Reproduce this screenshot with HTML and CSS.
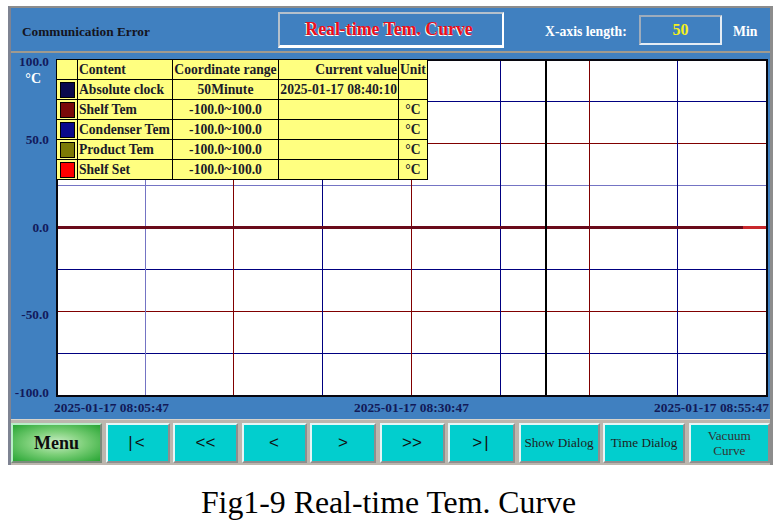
FILE: index.html
```html
<!DOCTYPE html>
<html lang="en">
<head>
<meta charset="utf-8">
<title>Real-time Tem. Curve</title>
<link rel="stylesheet" href="styles.css">
</head>
<body>
<div class="page">
  <div class="panel">
    <header class="topbar">
      <div class="status">Communication Error</div>
      <div class="title-box"><span class="title">Real-time Tem. Curve</span></div>
      <div class="xlabel">X-axis length:</div>
      <div class="xbox">50</div>
      <div class="xunit">Min</div>
    </header>
    <div class="sep"></div>
    <section class="chart">
      <div class="yaxis">
        <span class="tick t100">100.0</span>
        <span class="tick tunit">°C</span>
        <span class="tick t50">50.0</span>
        <span class="tick t0">0.0</span>
        <span class="tick tm50">-50.0</span>
        <span class="tick tm100">-100.0</span>
      </div>
      <div class="plot">
        <svg class="grid" width="708" height="334" viewBox="0 0 708 334" shape-rendering="crispEdges">
          <g stroke-width="1">
            <line x1="0" y1="40.5" x2="708" y2="40.5" stroke="#000080"/>
            <line x1="0" y1="82.5" x2="708" y2="82.5" stroke="#800000"/>
            <line x1="0" y1="124.5" x2="708" y2="124.5" stroke="#7474c4"/>
            <line x1="0" y1="208.5" x2="708" y2="208.5" stroke="#000080"/>
            <line x1="0" y1="250.5" x2="708" y2="250.5" stroke="#800000"/>
            <line x1="0" y1="292.5" x2="708" y2="292.5" stroke="#000080"/>
            <line x1="87.5" y1="0" x2="87.5" y2="334" stroke="#7474c4"/>
            <line x1="175.5" y1="0" x2="175.5" y2="334" stroke="#800000"/>
            <line x1="264.5" y1="0" x2="264.5" y2="334" stroke="#000080"/>
            <line x1="353.5" y1="0" x2="353.5" y2="334" stroke="#800000"/>
            <line x1="442.5" y1="0" x2="442.5" y2="334" stroke="#000080"/>
            <line x1="531.5" y1="0" x2="531.5" y2="334" stroke="#800000"/>
            <line x1="619.5" y1="0" x2="619.5" y2="334" stroke="#000080"/>
          </g>
          <rect x="0" y="165" width="708" height="3" fill="#6a0a1a"/>
          <rect x="685" y="165" width="23" height="3" fill="#c8282c"/>
          <rect x="487" y="0" width="2" height="334" fill="#000"/>
        </svg>
        <table class="legend">
          <colgroup>
            <col class="c-sw"><col class="c-name"><col class="c-range"><col class="c-val"><col class="c-unit">
          </colgroup>
          <tr>
            <td></td><td class="left">Content</td><td class="center">Coordinate range</td><td class="right">Current value</td><td class="left">Unit</td>
          </tr>
          <tr>
            <td><span class="sw sw-clock"></span></td><td class="left">Absolute clock</td><td class="center">50Minute</td><td class="right">2025-01-17 08:40:10</td><td></td>
          </tr>
          <tr>
            <td><span class="sw sw-shelf"></span></td><td class="left">Shelf Tem</td><td class="center">-100.0~100.0</td><td></td><td class="center">°C</td>
          </tr>
          <tr>
            <td><span class="sw sw-cond"></span></td><td class="left">Condenser Tem</td><td class="center">-100.0~100.0</td><td></td><td class="center">°C</td>
          </tr>
          <tr>
            <td><span class="sw sw-prod"></span></td><td class="left">Product Tem</td><td class="center">-100.0~100.0</td><td></td><td class="center">°C</td>
          </tr>
          <tr>
            <td><span class="sw sw-set"></span></td><td class="left">Shelf Set</td><td class="center">-100.0~100.0</td><td></td><td class="center">°C</td>
          </tr>
        </table>
      </div>
      <div class="times">
        <span>2025-01-17 08:05:47</span>
        <span>2025-01-17 08:30:47</span>
        <span>2025-01-17 08:55:47</span>
      </div>
    </section>
    <nav class="buttons">
      <div class="btn menu">Menu</div>
      <div class="btn nav nav-first">|&lt;</div>
      <div class="btn nav">&lt;&lt;</div>
      <div class="btn nav">&lt;</div>
      <div class="btn nav">&gt;</div>
      <div class="btn nav">&gt;&gt;</div>
      <div class="btn nav nav-last">&gt;|</div>
      <div class="btn txt">Show Dialog</div>
      <div class="btn txt">Time Dialog</div>
      <div class="btn txt two">Vacuum<br>Curve</div>
    </nav>
  </div>
  <p class="caption">Fig1-9 Real-time Tem. Curve</p>
</div>
</body>
</html>
```

FILE: styles.css
```css
* { box-sizing: border-box; }

html, body {
  margin: 0;
  padding: 0;
  background: #ffffff;
}

body {
  font-family: "Liberation Serif", "Times New Roman", serif;
  width: 784px;
  height: 523px;
  overflow: hidden;
}

.page {
  padding: 6px 0 0 8px;
}

.panel {
  width: 765px;
  background: #4080c0;
  border-top: 2px solid #8c8c8c;
  border-left: 3px solid #7e8392;
  border-right: 3px solid #8c8c8c;
}

/* ---------- header ---------- */
.topbar {
  display: flex;
  align-items: center;
  height: 43px;
}

.status {
  width: 267px;
  padding-left: 11px;
  margin-top: 5px;
  font-size: 13.3px;
  font-weight: bold;
  color: #14141e;
}

.title-box {
  align-self: flex-start;
  margin-top: 4px;
  width: 226px;
  height: 36px;
  border-top: 2px solid #b4c0cc;
  border-left: 2px solid #b4c0cc;
  border-right: 2px solid #ffffff;
  border-bottom: 3px solid #ffffff;
  display: flex;
  align-items: center;
  justify-content: center;
}

.title {
  font-size: 17.8px;
  font-weight: bold;
  color: #e8101c;
  text-shadow: -1px 1px 0 #ffffff;
  padding-right: 4px;
}

.xlabel {
  margin-left: 41px;
  margin-top: 5px;
  font-size: 13.7px;
  font-weight: bold;
  color: #ffffff;
  width: 94px;
}

.xbox {
  align-self: flex-start;
  margin-top: 7px;
  width: 83px;
  height: 30px;
  border-top: 2px solid #9eacbc;
  border-left: 2px solid #9eacbc;
  border-right: 2px solid #e4ecf4;
  border-bottom: 2px solid #e4ecf4;
  display: flex;
  align-items: center;
  justify-content: center;
  font-size: 16px;
  font-weight: bold;
  color: #f4f020;
}

.xunit {
  margin-left: 11px;
  margin-top: 5px;
  font-size: 13.7px;
  font-weight: bold;
  color: #ffffff;
}

.sep {
  height: 2px;
  background: #a09a8e;
}

/* ---------- chart ---------- */
.chart {
  display: grid;
  grid-template-columns: 45px 712px;
  grid-template-rows: 338px 22px;
  padding-top: 6px;
}

.yaxis {
  position: relative;
}

.tick {
  position: absolute;
  right: 7px;
  line-height: 16px;
  font-size: 13.3px;
  font-weight: bold;
  color: #121a5c;
}

.t100 { top: -5px; }
.tunit { top: 12px; right: 15px; color: #ffffff; font-size: 14px; }
.t50 { top: 73px; }
.t0 { top: 161px; }
.tm50 { top: 248px; }
.tm100 { top: 326px; }

.plot {
  position: relative;
  background: #ffffff;
  border: 2px solid #06060e;
}

.grid {
  display: block;
}

.legend {
  position: absolute;
  top: -2px;
  left: -2px;
  width: 371px;
  table-layout: fixed;
  border-collapse: collapse;
  background: #ffff80;
  font-size: 13.6px;
  font-weight: bold;
  color: #1a1a2a;
}

.c-sw { width: 21px; }
.c-name { width: 95px; }
.c-range { width: 106px; }
.c-val { width: 120px; }
.c-unit { width: 29px; }

.legend tr { height: 20px; }

.legend td {
  border: 1px solid #000000;
  padding: 0 1px;
  line-height: 18px;
  white-space: nowrap;
  overflow: hidden;
}

.legend .left { text-align: left; }
.legend .center { text-align: center; }
.legend .right { text-align: right; }

.sw {
  display: block;
  width: 15px;
  height: 16px;
  margin: 0 auto;
  border: 1px solid #000000;
}

.sw-clock { background: #0a0a4e; }
.sw-shelf { background: #7a0a0a; }
.sw-cond { background: #0a0a8c; }
.sw-prod { background: #7c7a06; }
.sw-set { background: #ff0000; }

.times {
  grid-column: 2;
  display: flex;
  justify-content: space-between;
  align-items: center;
  margin: 0 -1px 0 -2px;
  font-size: 13.4px;
  font-weight: bold;
  color: #121a58;
}

/* ---------- buttons ---------- */
.buttons {
  display: grid;
  grid-template-columns: 91px 64px 65px 65px 66px 65px 67px 81px 82px 1fr;
  column-gap: 3.5px;
  height: 46px;
  padding: 3px 0 2px 0;
  background: #bcb6ae;
  border-top: 1px solid #d8d4cc;
}

.btn {
  display: flex;
  align-items: center;
  justify-content: center;
  background: #02cece;
  border-style: solid;
  border-width: 2px;
  border-color: #e6f6f6 #8e8e8e #8e8e8e #e6f6f6;
  color: #1a1a1a;
}

.menu {
  background: radial-gradient(ellipse at center, #cdeec8 0%, #7ed07a 45%, #27a533 100%);
  border-color: #b8eec8 #7a8a7a #7a8a7a #b8eec8;
  font-size: 18px;
  font-weight: bold;
  color: #0e0e0e;
}

.nav {
  font-family: "Liberation Sans", Arial, sans-serif;
  font-size: 17px;
  color: #111111;
}

.nav-first, .nav-last {
  letter-spacing: 2px;
}

.txt {
  font-size: 13.2px;
  color: #1e1e1e;
}

.two {
  text-align: center;
  line-height: 15px;
  color: #333333;
}

/* ---------- caption ---------- */
.caption {
  margin: 22px 0 0 0;
  padding-right: 15px;
  text-align: center;
  font-size: 31.8px;
  line-height: 31px;
  color: #000000;
}
```
